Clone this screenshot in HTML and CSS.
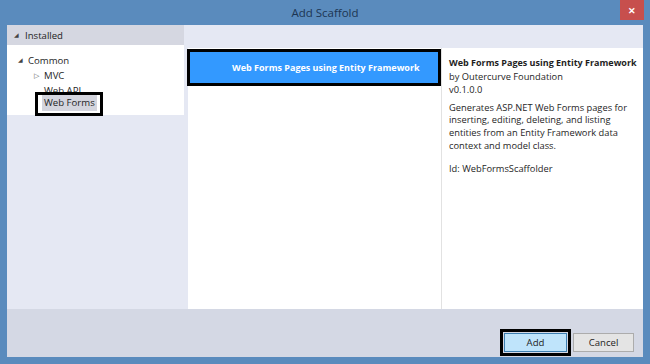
FILE: index.html
```html
<!DOCTYPE html>
<html>
<head>
<meta charset="utf-8">
<link rel="stylesheet" href="styles.css">
</head>
<body>
<div class="window">
  <div class="titlebar">
    <span class="title">Add Scaffold</span>
    <span class="close">&#x2715;</span>
  </div>
  <div class="client">
    <div class="main">
      <div class="left">
        <div class="installed"><span class="tri">&#x25E2;</span>Installed</div>
        <div class="tree">
          <div class="node lvl1"><span class="tri">&#x25E2;</span>Common</div>
          <div class="node lvl2"><span class="tri open">&#x25B7;</span>MVC</div>
          <div class="node lvl2"><span class="tri"></span>Web API</div>
          <div class="node lvl2w"><span class="annot"><span class="sel">Web Forms</span></span></div>
        </div>
      </div>
      <div class="right">
        <div class="strip"></div>
        <div class="panes">
          <div class="list">
            <div class="item">Web Forms Pages using Entity Framework</div>
          </div>
          <div class="detail">
            <div class="dtitle">Web Forms Pages using Entity Framework</div>
            <div>by Outercurve Foundation</div>
            <div>v0.1.0.0</div>
            <p class="desc">Generates ASP.NET Web Forms pages for<br>inserting, editing, deleting, and listing<br>entities from an Entity Framework data<br>context and model class.</p>
            <p class="id">Id: WebFormsScaffolder</p>
          </div>
        </div>
      </div>
    </div>
    <div class="footer">
      <button class="btn add">Add</button>
      <button class="btn cancel">Cancel</button>
    </div>
  </div>
</div>
</body>
</html>
```
FILE: styles.css
```css
html, body { margin: 0; padding: 0; }
body {
  width: 650px; height: 364px; overflow: hidden;
  background: #5a8bbd;
  font-family: "Open Sans", "Noto Sans", sans-serif;
  font-size: 9.6px;
  color: #1e1e1e;
}
.window { display: flex; flex-direction: column; height: 364px; }
.titlebar {
  height: 25px; position: relative;
  display: flex; align-items: center; justify-content: center;
}
.title { font-size: 11.5px; color: #1c3552; }
.close {
  position: absolute; right: 6px; top: 0;
  width: 24px; height: 20px;
  background: #c74f4d; color: #fff;
  display: flex; align-items: center; justify-content: center;
  font-size: 9px; font-weight: bold;
}
.client {
  margin: 0 7px 7px 7px; flex: 1;
  display: flex; flex-direction: column;
  background: #e5e8f3;
}
.main { flex: 1; display: flex; }
.left { width: 177px; display: flex; flex-direction: column; }
.installed {
  height: 20px; background: #d5d7e1;
  display: flex; align-items: center; padding-left: 7px;
}
.tri { font-size: 6px; color: #444; display: inline-block; width: 11px; flex: none; }
.node .tri { width: 10px; }
.tri.open { font-size: 7px; color: #555; }
.tree { background: #fff; height: 70px; padding-top: 8px; box-sizing: border-box; }
.node { height: 15px; line-height: 15px; display: flex; align-items: center; }
.lvl1 { padding-left: 11px; }
.lvl2 { padding-left: 27px; }
.lvl2w { padding-left: 28px; margin-top: -2px; }
.annot {
  border: 3px solid #000; padding: 0 3px 2px 4px;
  display: inline-block;
}
.sel { background: #d4d5de; padding: 0 2px; display: inline-block; line-height: 16px; }
.right { flex: 1; margin-left: 4px; display: flex; flex-direction: column; }
.strip { height: 23px; }
.panes { flex: 1; display: flex; }
.list {
  width: 253px; background: #fff; border-right: 1px solid #e2e2e2;
  padding: 4px 3px 0 2px; box-sizing: border-box; width: 254px;
}
.item {
  height: 31px; background: #3399ff; color: #fff; font-weight: bold;
  font-size: 9px;
  display: flex; align-items: center; padding-left: 42px;
  outline: 3px solid #000;
}
.detail {
  flex: 1; background: #fff; padding: 8px 0 0 7px; line-height: 13.5px;
  font-size: 9.3px; white-space: nowrap;
}
.dtitle { font-weight: bold; font-size: 9px; }
.desc { margin: 5px 0 0 0; line-height: 12.7px; }
.id { margin: 10px 0 0 0; }
.footer {
  height: 48px; background: #d4d8e4;
  display: flex; justify-content: flex-end; align-items: flex-end;
  padding: 0 9px 5px 0; box-sizing: border-box; gap: 6px;
}
.btn {
  font-family: inherit; font-size: 9.6px; color: #1e1e1e;
  width: 63px; height: 19px; padding: 0; margin: 0;
}
.add { background: #bfe4fb; border: 1px solid #3c7fb1; outline: 3px solid #000; outline-offset: 1px; }
.cancel { background: #e4e4e4; border: 1px solid #acacac; width: 61px; }
```
